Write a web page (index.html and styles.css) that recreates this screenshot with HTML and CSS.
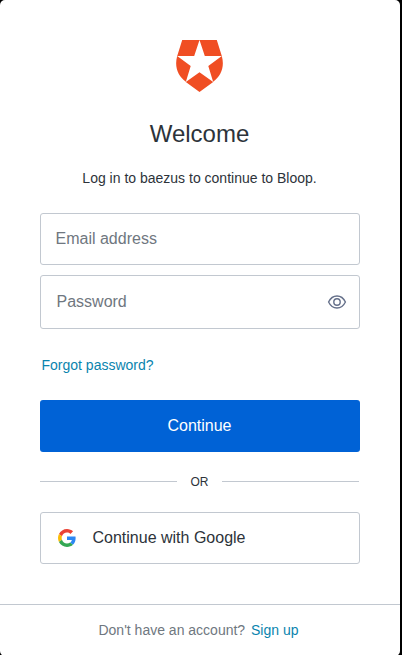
FILE: index.html
```html
<!DOCTYPE html>
<html lang="en">
<head>
<meta charset="utf-8">
<title>Log in</title>
<link rel="stylesheet" href="styles.css">
</head>
<body>
<main class="card">
  <div class="content">
    <svg class="logo" viewBox="0 0 47 52" aria-hidden="true">
      <path fill="#f04e23" d="M6.200 0H23.500L18.200 16H1.200ZM23.500 0H40.800L45.800 16H28.800ZM1.200 16L14.700 25.900L9.900 41.800C1.800 36 -1.800 26.500 1.200 16ZM45.800 16L32.300 25.900L37.100 41.800C45.200 36 48.800 26.500 45.800 16ZM23.500 32.200L37.200 42L23.500 52L9.800 42Z"/>
    </svg>
    <h1 class="title">Welcome</h1>
    <p class="intro">Log in to baezus to continue to Bloop.</p>
    <form class="form">
      <input class="field" type="email" placeholder="Email address" aria-label="Email address">
      <div class="field field-password">
        <input class="password" type="password" placeholder="Password" aria-label="Password">
        <svg class="eye" viewBox="0 0 20 16" fill="none" stroke="#65708a" stroke-width="1.400" aria-hidden="true">
          <path d="M1.600 8C3.500 4 6.400 2 10 2S16.500 4 18.400 8C16.500 12 13.600 14 10 14S3.500 12 1.600 8Z"/>
          <circle cx="10" cy="8" r="3.200"/>
        </svg>
      </div>
      <a class="link forgot">Forgot password?</a>
      <button class="submit" type="button">Continue</button>
    </form>
    <div class="divider"><span>OR</span></div>
    <button class="google" type="button">
      <svg class="google-logo" viewBox="0 0 48 48" aria-hidden="true">
        <path fill="#ea4335" d="M24 9.500c3.540 0 6.710 1.220 9.210 3.600l6.850-6.850C35.900 2.380 30.470 0 24 0 14.620 0 6.510 5.380 2.560 13.220l7.980 6.190C12.430 13.720 17.740 9.500 24 9.500z"/>
        <path fill="#2d87f3" d="M46.980 24.550c0-1.570-.15-3.090-.38-4.550H24v9.020h12.940c-.58 2.960-2.260 5.480-4.780 7.180l7.730 6c4.510-4.180 7.090-10.360 7.090-17.650z"/>
        <path fill="#fbbc05" d="M10.530 28.590c-.48-1.450-.76-2.990-.76-4.590s.27-3.140.76-4.590l-7.980-6.190C.92 16.460 0 20.120 0 24s.92 7.540 2.560 10.780l7.970-6.190z"/>
        <path fill="#34a853" d="M24 48c6.480 0 11.930-2.130 15.890-5.810l-7.730-6c-2.150 1.450-4.920 2.300-8.160 2.300-6.260 0-11.570-4.220-13.470-9.910l-7.980 6.190C6.510 42.620 14.620 48 24 48z"/>
      </svg>
      Continue with Google
    </button>
  </div>
  <footer class="footer">Don't have an account? <a class="link signup">Sign up</a></footer>
</main>
</body>
</html>
```
FILE: styles.css
```css
* { box-sizing: border-box; }
body {
  margin: 0;
  background: #000;
  color: #2d333a;
  font: 14px/20px "Liberation Sans", Arial, sans-serif;
  overflow: hidden;
}
input, button { font: inherit; color: inherit; margin: 0; }
.card {
  width: 400px;
  height: 656px;
  background: #fff;
  border-radius: 5px;
}
.content {
  height: 604px;
  padding: 40px 40px 0;
  display: flex;
  flex-direction: column;
}
.logo { width: 47px; height: 52px; margin-left: 136px; }
.title {
  margin: 27px 0 0;
  padding-right: 1px;
  font-size: 24px;
  line-height: 30px;
  font-weight: 400;
  text-align: center;
}
.intro { margin: 19px 0 25px; padding-right: 1px; text-align: center; }
.form { display: flex; flex-direction: column; }
.field {
  width: 320px;
  height: 52px;
  padding: 0 14.5px 1px;
  border: 1px solid #c2c8d0;
  border-radius: 3px;
  background: #fff;
  font-size: 16px;
}
.field::placeholder, .password::placeholder { color: #6f7780; opacity: 1; }
.field-password {
  height: 54px;
  margin-top: 10px;
  padding: 0 12px 0 15.5px;
  display: flex;
  align-items: center;
}
.password { flex: 1; min-width: 0; padding: 0; border: 0; }
.eye { width: 20px; height: 16px; margin-bottom: 1px; }
.link { color: #0a84ae; }
.forgot { margin: 26px 0 25px 1.5px; }
.submit {
  height: 52px;
  padding: 0 1px 1px 0;
  border: 0;
  border-radius: 3px;
  background: #0062d6;
  color: #fff;
  font-size: 16px;
}
.divider {
  height: 20px;
  margin: 20px 1px 20px 0;
  display: flex;
  align-items: center;
  font-size: 12px;
}
.divider span { width: 45px; text-align: center; }
.divider::before, .divider::after {
  content: "";
  flex: 1;
  height: 1px;
  margin-bottom: 1px;
  background: #c2c8d0;
}
.google {
  height: 52px;
  padding: 0 16px 1px 17px;
  display: flex;
  align-items: center;
  gap: 16.5px;
  border: 1px solid #c2c8d0;
  border-radius: 3px;
  background: #fff;
  font-size: 16px;
}
.google-logo { width: 18px; height: 18px; margin-top: 1px; }
.footer {
  height: 52px;
  padding: 15px 3px 0 0;
  border-top: 1px solid #c2c8d0;
  color: #6f7780;
  text-align: center;
}
.signup { margin-left: 2px; }
```
